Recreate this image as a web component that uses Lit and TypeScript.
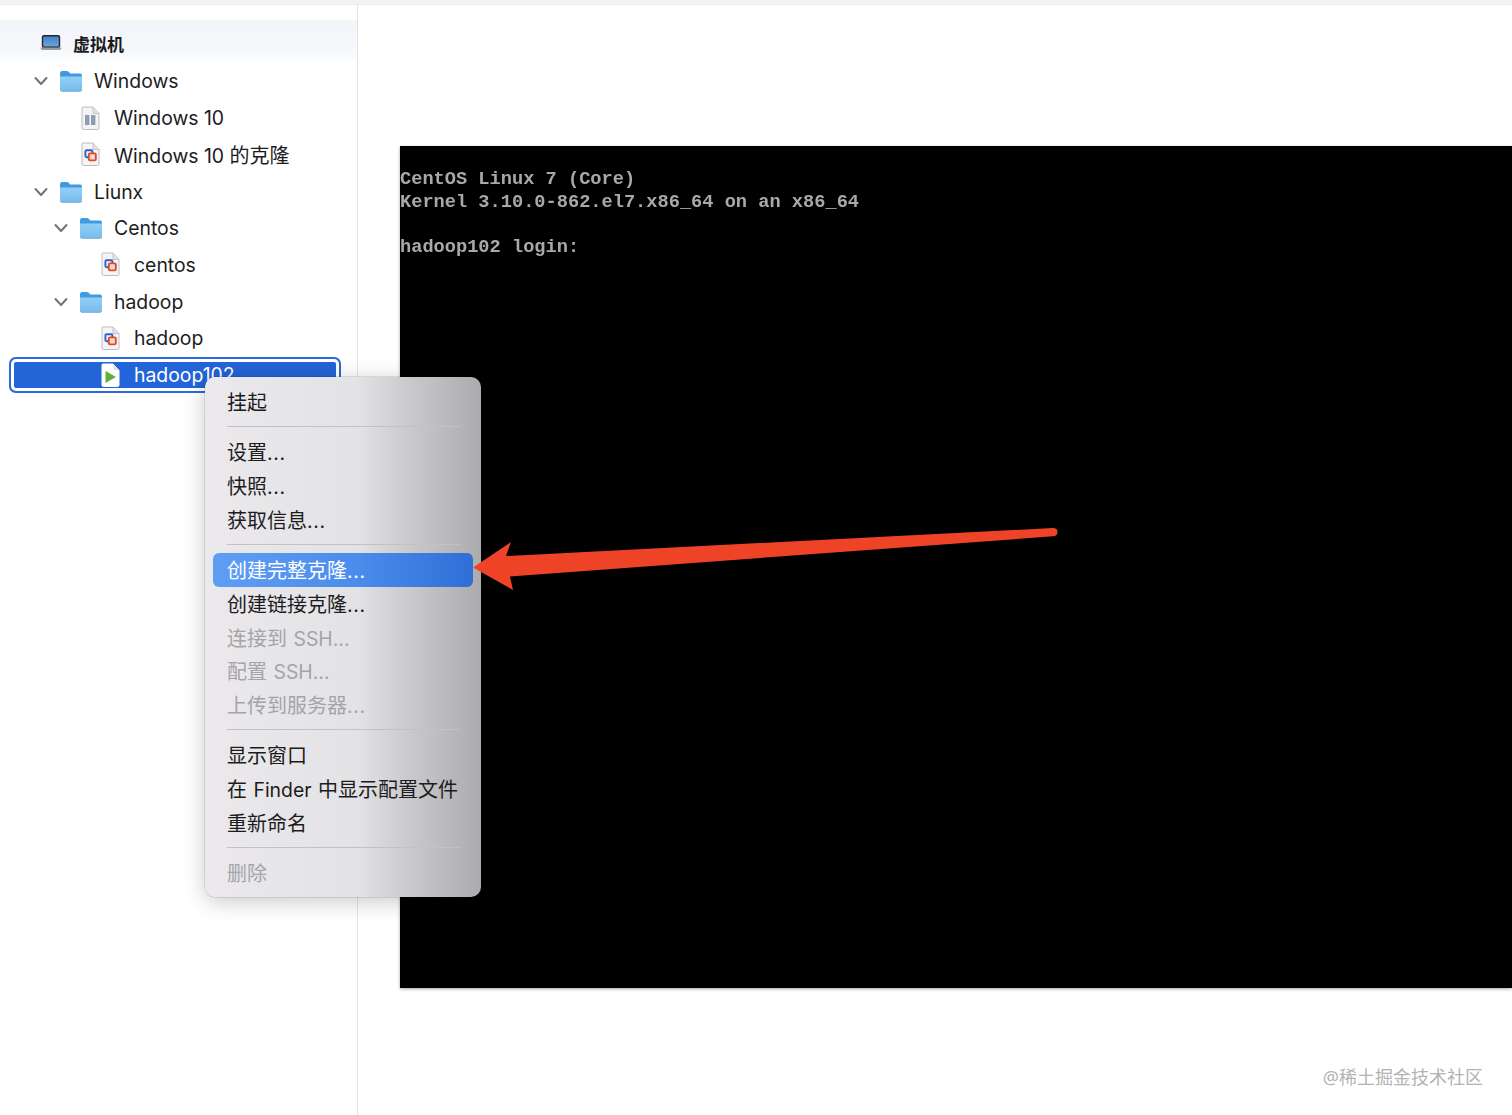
import { LitElement, html, css, svg } from "lit";
import { customElement } from "lit/decorators.js";

type Kind = "folder" | "pause" | "clone" | "play";
interface Row { label: string; depth: number; kind: Kind; chevron?: boolean; selected?: boolean }

const ROWS: Row[] = [
  { label: "Windows", depth: 0, kind: "folder", chevron: true },
  { label: "Windows 10", depth: 1, kind: "pause" },
  { label: "Windows 10 的克隆", depth: 1, kind: "clone" },
  { label: "Liunx", depth: 0, kind: "folder", chevron: true },
  { label: "Centos", depth: 1, kind: "folder", chevron: true },
  { label: "centos", depth: 2, kind: "clone" },
  { label: "hadoop", depth: 1, kind: "folder", chevron: true },
  { label: "hadoop", depth: 2, kind: "clone" },
  { label: "hadoop102", depth: 2, kind: "play", selected: true },
];

type Entry = { t: string; off?: boolean; hi?: boolean } | null;
const MENU: Entry[] = [
  { t: "挂起" }, null,
  { t: "设置..." }, { t: "快照..." }, { t: "获取信息..." }, null,
  { t: "创建完整克隆...", hi: true }, { t: "创建链接克隆..." },
  { t: "连接到 SSH...", off: true }, { t: "配置 SSH...", off: true }, { t: "上传到服务器...", off: true }, null,
  { t: "显示窗口" }, { t: "在 Finder 中显示配置文件" }, { t: "重新命名" }, null,
  { t: "删除", off: true },
];

/* Latin runs are set a touch smaller than the CJK runs, as in the system font of the reference. */
const runs = (text: string) =>
  text.split(/([\u4e00-\u9fff]+)/).map((part, i) =>
    i % 2
      ? html`<span class="c">${part}</span>`
      : part === "..."
        ? html`<span class="dots">${part}</span>`
        : part
  );

const chevron = svg`<svg width="14" height="10" viewBox="0 0 14 10"><polyline points="1.5,2 7,8 12.5,2" fill="none" stroke="#737373" stroke-width="2" stroke-linecap="round" stroke-linejoin="round"/></svg>`;

const folder = svg`<svg width="24" height="22" viewBox="0 0 24 22">
  <defs><linearGradient id="fg" x1="0" y1="0" x2="0" y2="1"><stop offset="0" stop-color="#92cff6"/><stop offset="1" stop-color="#78bcec"/></linearGradient></defs>
  <path d="M1 4 Q1 1 3 1 H8 Q9.5 1 10.5 2.5 L11 3.5 H21.5 Q23 3.5 23 6 V10 H1Z" fill="#3f9ae0"/>
  <path d="M1 6.5 H23 V19 Q23 21 21 21 H3 Q1 21 1 19Z" fill="url(#fg)"/>
  <path d="M1 20 Q2 21.4 3 21.4 H21 Q22 21.4 23 20" fill="none" stroke="#5d9fd0" stroke-width="0.8"/>
</svg>`;

const page = (fill: string, stroke: string) => svg`
  <path d="M1 2 Q1 1 2 1 H12 L18 7.5 V22 Q18 23.5 16.5 23.5 H2.5 Q1 23.5 1 22Z" fill="${fill}" stroke="${stroke}" stroke-width="1"/>
  <path d="M12 1 V7.5 H18" fill="#e2e2e2" stroke="${stroke}" stroke-width="0.8"/>`;

const fileIcon = (kind: Kind) => {
  if (kind === "pause") {
    return svg`<svg width="19" height="25" viewBox="0 0 19 25">${page("#f3f3f4", "#bdbdc0")}
      <rect x="4" y="9" width="4.4" height="10" fill="#8d9cb6"/><rect x="10" y="9" width="4.4" height="10" fill="#8d9cb6"/></svg>`;
  }
  if (kind === "clone") {
    return svg`<svg width="19" height="25" viewBox="0 0 19 25">${page("#f5f5f6", "#bdbdc0")}
      <rect x="4.4" y="8.2" width="7" height="7" rx="1.2" fill="none" stroke="#2f62c4" stroke-width="1.9"/>
      <rect x="7.8" y="11.4" width="7" height="7" rx="1.2" fill="#f7d9d0" stroke="#dc4a2c" stroke-width="1.9"/></svg>`;
  }
  return svg`<svg width="19" height="25" viewBox="0 0 19 25">${page("#ffffff", "#ffffff")}
    <path d="M4.5 8 L15 14 L4.5 20Z" fill="#5fb13b"/></svg>`;
};

const laptop = svg`<svg width="22" height="16" viewBox="0 0 22 16">
  <defs><linearGradient id="lp" x1="0" y1="0" x2="0" y2="1"><stop offset="0" stop-color="#3f7fc8"/><stop offset="1" stop-color="#6fa6dc"/></linearGradient></defs>
  <rect x="2.5" y="0.8" width="17" height="11.4" rx="1.2" fill="url(#lp)" stroke="#25272b" stroke-width="1.4"/>
  <path d="M0.5 12.6 H21.5 Q21.5 15 19.5 15 H2.5 Q0.5 15 0.5 12.6Z" fill="#9a9ca0"/>
</svg>`;

@customElement("app-root")
export class AppRoot extends LitElement {
  static styles = css`
    :host {
      display: block;
      position: relative;
      height: 1115px;
      overflow: hidden;
      background: #fff;
      font-family: Inter, "Noto Sans CJK SC", sans-serif;
      color: #1d1d1f;
    }
    .c { font-size: 20px; }
    .dots { letter-spacing: 0.7px; }
    .strip { height: 5px; background: #f3f1f2; border-bottom: 1px solid #ececec; box-sizing: border-box; }
    .body { display: flex; height: 1110px; }
    .side {
      width: 358px;
      flex: none;
      box-sizing: border-box;
      border-right: 1px solid #e3e3e3;
      padding-top: 15px;
    }
    .head {
      height: 42px;
      box-sizing: border-box;
      padding: 4px 0 0 40px;
      display: flex;
      align-items: center;
      gap: 11px;
      background: linear-gradient(to bottom, #f2f5fa, #f5f7fb 65%, #fcfdfe);
      font: 700 17px "Noto Sans CJK SC", sans-serif;
      color: #1b1b1d;
    }
    .head svg { display: block; }
    .list { padding: 1px 16px 0 9px; }
    .row {
      height: 36.72px;
      display: flex;
      align-items: center;
      font-size: 19.4px;
      border-radius: 7px;
      white-space: nowrap;
    }
    .row.sel {
      background: #2364d8;
      box-shadow: inset 0 0 0 2px #2a6ada, inset 0 0 0 5px #fff;
      color: #fff;
    }
    .chev { width: 14px; flex: none; margin-right: 11px; display: flex; }
    .icon { width: 24px; flex: none; margin-right: 11px; display: flex; justify-content: center; }
    .icon svg { display: block; }
    .icon .file { margin-left: -2px; }
    .chev svg { display: block; }
    .main { flex: 1; min-width: 0; padding: 141px 0 0 42px; }
    .screen {
      height: 842px;
      background: #000;
      box-shadow: 0 1px 3px rgba(0, 0, 0, 0.35);
      padding-top: 21.8px;
      box-sizing: border-box;
    }
    .console {
      color: #a8a8a8;
      font: 700 18.67px/22.7px "Liberation Mono", monospace;
      white-space: pre;
      filter: blur(0.35px);
    }
    .menu {
      position: absolute;
      left: 205px;
      top: 377px;
      width: 276px;
      height: 520px;
      box-sizing: border-box;
      padding: 7.6px 8px 6px;
      border-radius: 10px;
      background: linear-gradient(to right, #ebe9ec 0%, #e3e2e5 55%, #cfced1 70%, #b9b8bb 88%, #acabae 100%);
      box-shadow: 0 4px 22px rgba(0, 0, 0, 0.22), 0 0 0 0.5px rgba(0, 0, 0, 0.18);
      font-size: 19.4px;
      color: #1c1c1e;
      white-space: nowrap;
    }
    .item {
      height: 33.65px;
      box-sizing: border-box;
      display: flex;
      align-items: center;
      padding: 0 0 0 14px;
      border-radius: 6px;
      white-space: pre;
      word-spacing: 1px;
    }
    .item.off { color: #a5a4a8; }
    .item.hi {
      color: #fff;
      background: linear-gradient(to right, #5e9ef5, #4b8cec 55%, #2d6fd6);
    }
    .sep { height: 16.9px; display: flex; align-items: center; padding: 0 13px 0 14px; }
    .sep i { display: block; height: 1px; flex: 1; background: #c2c1c4; }
    .arrow { position: absolute; left: 0; top: 0; pointer-events: none; }
    .mark {
      position: absolute;
      right: 29px;
      top: 1064px;
      font: 18px/26px "Noto Sans", "Noto Sans CJK SC", sans-serif;
      color: #b3b3b3;
    }
  `;

  render() {
    return html`
      <div class="strip"></div>
      <div class="body">
        <aside class="side">
          <div class="head">${laptop}<span>虚拟机</span></div>
          <div class="list">
            ${ROWS.map(
              (r) => html`<div class="row ${r.selected ? "sel" : ""}" style="padding-left:${25 + 20 * r.depth}px">
                <span class="chev">${r.chevron ? chevron : ""}</span>
                <span class="icon">${r.kind === "folder" ? folder : html`<span class="file">${fileIcon(r.kind)}</span>`}</span>
                <span>${runs(r.label)}</span>
              </div>`
            )}
          </div>
        </aside>
        <main class="main">
          <div class="screen"><div class="console">CentOS Linux 7 (Core)
Kernel 3.10.0-862.el7.x86_64 on an x86_64

hadoop102 login:</div></div>
        </main>
      </div>
      <div class="menu">
        ${MENU.map((m) =>
          m
            ? html`<div class="item ${m.off ? "off" : ""} ${m.hi ? "hi" : ""}"><span>${runs(m.t)}</span></div>`
            : html`<div class="sep"><i></i></div>`
        )}
      </div>
      <svg class="arrow" width="1512" height="1115" viewBox="0 0 1512 1115">
        <path d="M473 567.5 L511 542 L506 556 L1053 528 Q1057.5 528 1057.5 532 Q1057.5 536 1053 536.3 L510 576.5 L513 590Z" fill="#ee4327"/>
      </svg>
      <div class="mark">@稀土掘金技术社区</div>
    `;
  }
}
